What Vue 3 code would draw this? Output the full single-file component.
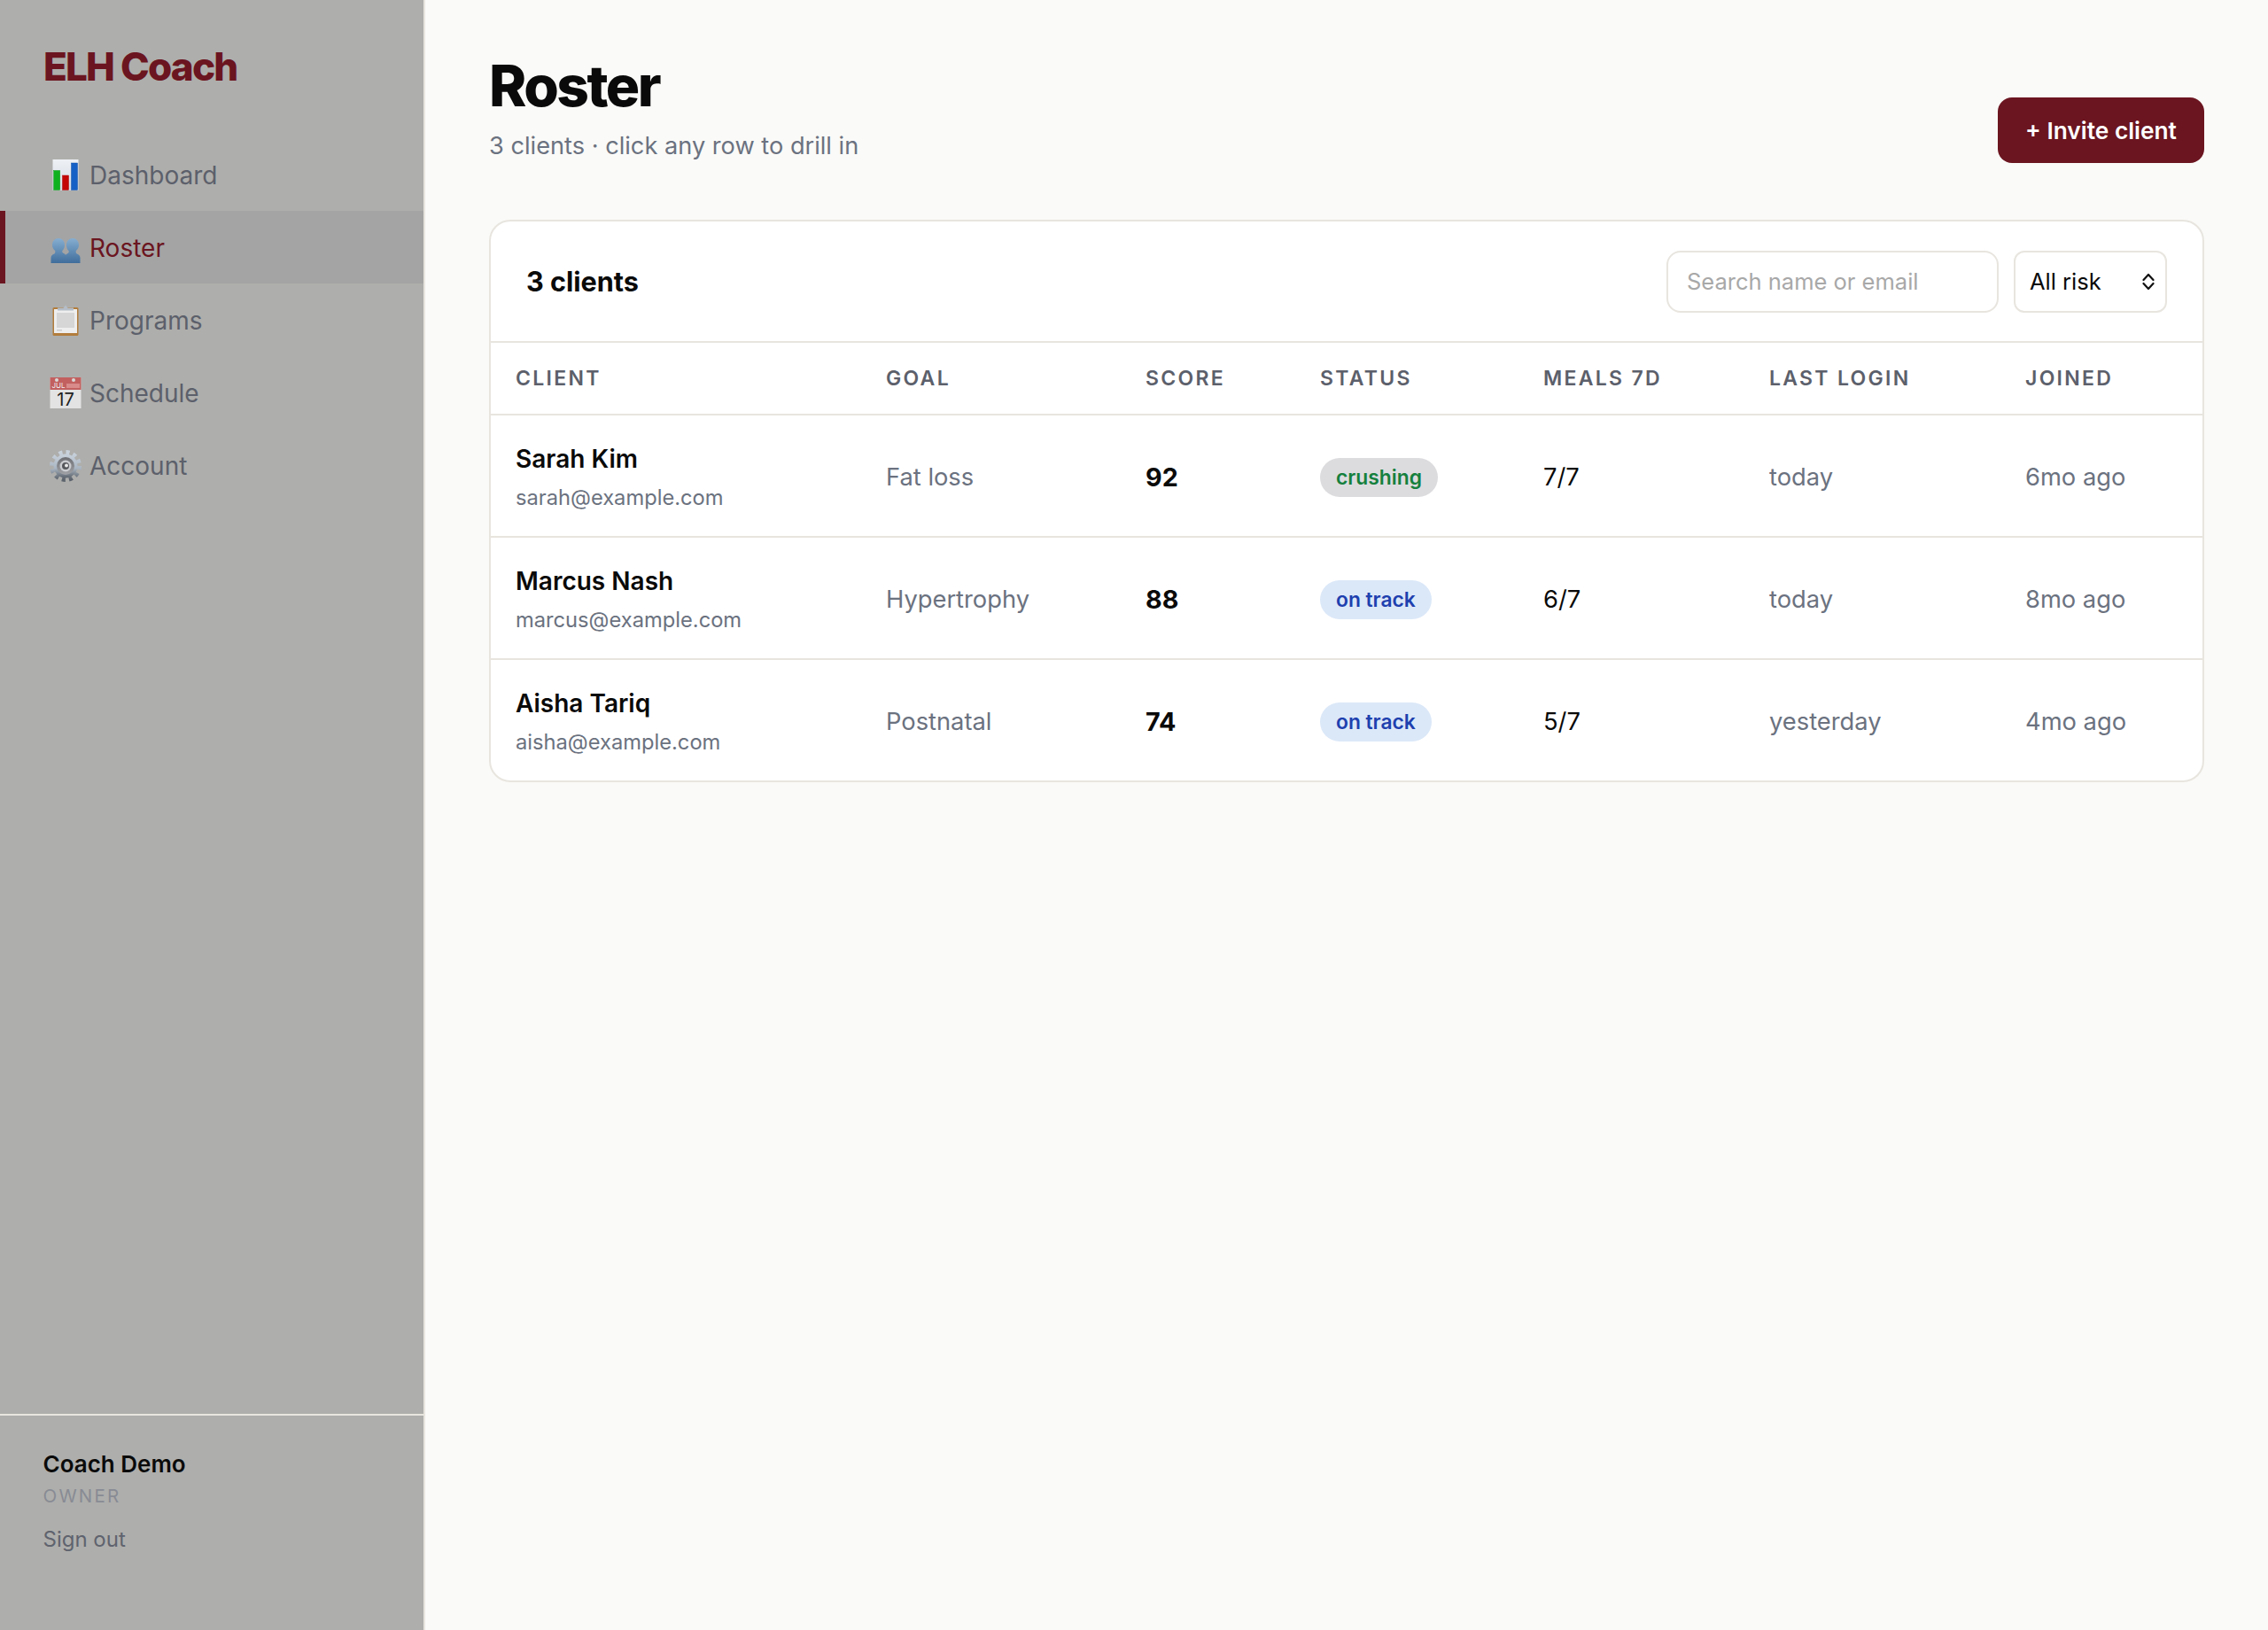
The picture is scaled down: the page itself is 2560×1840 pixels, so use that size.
<template>
  <div class="app">
    <!-- Sidebar -->
    <aside class="sidebar">
      <div class="brand">ELH Coach</div>
      <nav class="nav">
        <a v-for="item in navItems" :key="item.label" class="nav-item" :class="{ active: item.label === 'Roster' }" href="#">
          <span class="nav-icon">
            <svg v-if="item.icon === 'chart'" viewBox="0 0 36 36" width="36" height="36">
              <defs>
                <linearGradient id="chartBg" x1="0" y1="0" x2="0" y2="1">
                  <stop offset="0" stop-color="#eef1f5" />
                  <stop offset="1" stop-color="#d3dae4" />
                </linearGradient>
              </defs>
              <rect x="3.500" y="0" width="29" height="35" fill="url(#chartBg)" />
              <rect x="4.700" y="12.500" width="7" height="22" fill="#0fb21e" stroke="#0a9a18" stroke-width=".5" />
              <rect x="14.500" y="18" width="7" height="16.500" fill="#c40606" stroke="#b00808" stroke-width=".5" />
              <rect x="24.500" y="4" width="7" height="30.500" fill="#1560c6" stroke="#1050a8" stroke-width=".5" />
            </svg>
            <svg v-else-if="item.icon === 'users'" viewBox="0 0 36 36" width="36" height="36">
              <defs>
                <linearGradient id="userFill" x1="0" y1="0" x2="0" y2="1">
                  <stop offset="0" stop-color="#86aed1" />
                  <stop offset="1" stop-color="#3f6d9b" />
                </linearGradient>
              </defs>
              <g fill="url(#userFill)">
                <path d="M10 7c4.200 0 7 3.300 7 7.600 0 2.700-1 5-2.600 6.500-.3 1.200-.1 2 .7 2.500 1.700.9 2.900 1.500 3.400 3.400V35H1.500v-6c0-2.200 1.500-3.500 3.700-4.500 1-.5 1.300-1.300 1-3.400C4.300 19.600 3 17.300 3 14.600 3 10.300 5.800 7 10 7z" />
                <path d="M26 7c4.200 0 7 3.300 7 7.600 0 2.700-1.300 5-3.200 6.500-.3 2.100 0 2.900 1 3.400 2.200 1 3.700 2.300 3.700 4.500v6H17.500v-7.900c.5-1.900 1.700-2.500 3.400-3.400.8-.5 1-1.300.7-2.500-1.600-1.500-2.600-3.800-2.600-6.500C19 10.300 21.800 7 26 7z" />
              </g>
            </svg>
            <svg v-else-if="item.icon === 'clipboard'" viewBox="0 0 36 36" width="36" height="36">
              <rect x="3.500" y="3" width="29" height="32" rx="1.500" fill="#b27d3c" />
              <rect x="5" y="5" width="26" height="27" fill="#eeeeee" />
              <rect x="8" y="9" width="20" height="17" fill="#d6d6d6" />
              <rect x="8" y="28" width="6" height="1.500" fill="#cccccc" />
              <path d="M9 6.500V3.500h6.500L18 .5l2.500 3H27v3z" fill="#b4bdc8" />
            </svg>
            <svg v-else-if="item.icon === 'calendar'" viewBox="0 0 36 36" width="36" height="36">
              <rect x=".5" y="0" width="35" height="35" fill="#e3e3e3" />
              <rect x=".5" y="0" width="35" height="14" fill="#c2605f" />
              <circle cx="8" cy="3" r="2" fill="#d8d8d8" />
              <circle cx="27" cy="3" r="2" fill="#d8d8d8" />
              <rect x="19" y="7" width="15" height="5" fill="#d88b8a" />
              <text x="2.500" y="12" class="cal-month">JUL</text>
              <text x="18" y="31.500" text-anchor="middle" class="cal-day">17</text>
            </svg>
            <svg v-else viewBox="0 0 36 36" width="36" height="36">
              <defs>
                <linearGradient id="gearFill" x1="0" y1="0" x2="0" y2="1">
                  <stop offset="0" stop-color="#c8d2dd" />
                  <stop offset=".6" stop-color="#a9b5c2" />
                  <stop offset="1" stop-color="#5c636c" />
                </linearGradient>
                <linearGradient id="gearRing" x1="0" y1="0" x2="0" y2="1">
                  <stop offset="0" stop-color="#6d6f74" />
                  <stop offset="1" stop-color="#a0a2a6" />
                </linearGradient>
              </defs>
              <circle cx="18" cy="18" r="15" fill="none" stroke="url(#gearFill)" stroke-width="6" stroke-dasharray="3.900 3.960" />
              <circle cx="18" cy="18" r="13.500" fill="url(#gearFill)" />
              <circle cx="18" cy="18" r="10" fill="url(#gearRing)" />
              <circle cx="18" cy="18" r="6.500" fill="#c9cbcf" />
              <circle cx="18" cy="18" r="4" fill="#55575c" />
              <circle cx="19" cy="17.500" r="2" fill="#e8e8e8" />
            </svg>
          </span>
          <span>{{ item.label }}</span>
        </a>
      </nav>
      <div class="side-foot">
        <div class="coach-name">Coach Demo</div>
        <div class="coach-role">OWNER</div>
        <a class="sign-out" href="#">Sign out</a>
      </div>
    </aside>

    <!-- Main -->
    <main class="main">
      <header class="page-head">
        <div>
          <h1>Roster</h1>
          <p class="sub">3 clients · click any row to drill in</p>
        </div>
        <button class="invite">+ Invite client</button>
      </header>

      <section class="card">
        <div class="card-head">
          <h2>3 clients</h2>
          <div class="filters">
            <input class="search" type="text" placeholder="Search name or email" />
            <div class="select-wrap">
              <select class="risk">
                <option>All risk</option>
              </select>
              <svg class="chevrons" viewBox="0 0 14 20" width="14" height="20">
                <path d="M1.500 8 7 2l5.500 6M1.500 12 7 18l5.500-6" fill="none" stroke="#111" stroke-width="2.200" stroke-linecap="round" stroke-linejoin="round" />
              </svg>
            </div>
          </div>
        </div>

        <table class="roster">
          <colgroup>
            <col class="c-client" />
            <col class="c-goal" />
            <col class="c-score" />
            <col class="c-status" />
            <col class="c-meals" />
            <col class="c-login" />
            <col class="c-joined" />
          </colgroup>
          <thead>
            <tr>
              <th>Client</th>
              <th>Goal</th>
              <th>Score</th>
              <th>Status</th>
              <th>Meals 7d</th>
              <th>Last login</th>
              <th>Joined</th>
            </tr>
          </thead>
          <tbody>
            <tr v-for="c in clients" :key="c.email">
              <td>
                <div class="name">{{ c.name }}</div>
                <div class="email">{{ c.email }}</div>
              </td>
              <td class="muted">{{ c.goal }}</td>
              <td class="score">{{ c.score }}</td>
              <td><span class="badge" :class="c.status === 'crushing' ? 'good' : 'track'">{{ c.status }}</span></td>
              <td>{{ c.meals }}</td>
              <td class="muted">{{ c.login }}</td>
              <td class="muted">{{ c.joined }}</td>
            </tr>
          </tbody>
        </table>
      </section>
    </main>
  </div>
</template>

<script setup>
const navItems = [
  { label: "Dashboard", icon: "chart" },
  { label: "Roster", icon: "users" },
  { label: "Programs", icon: "clipboard" },
  { label: "Schedule", icon: "calendar" },
  { label: "Account", icon: "gear" },
];

const clients = [
  { name: "Sarah Kim", email: "sarah@example.com", goal: "Fat loss", score: 92, status: "crushing", meals: "7/7", login: "today", joined: "6mo ago" },
  { name: "Marcus Nash", email: "marcus@example.com", goal: "Hypertrophy", score: 88, status: "on track", meals: "6/7", login: "today", joined: "8mo ago" },
  { name: "Aisha Tariq", email: "aisha@example.com", goal: "Postnatal", score: 74, status: "on track", meals: "5/7", login: "yesterday", joined: "4mo ago" },
];
</script>

<style>
html,
body {
  margin: 0;
  background: #fafaf8;
}
</style>

<style scoped>
* {
  box-sizing: border-box;
}

.app {
  display: flex;
  height: 1840px;
  font-family: Inter, "Liberation Sans", sans-serif;
  color: #0a0a0a;
}

/* Sidebar */
.sidebar {
  width: 480px;
  flex-shrink: 0;
  display: flex;
  flex-direction: column;
  background: #aeaeac;
  border-right: 2px solid #e8e5df;
}

.brand {
  height: 156px;
  padding: 48px 48px 0 49px;
  font-size: 44px;
  line-height: 54px;
  font-weight: 800;
  letter-spacing: -1.800px;
  color: #6b1520;
}

.nav {
  flex: 1;
}

.nav-item {
  display: flex;
  align-items: center;
  gap: 9.500px;
  height: 82px;
  padding: 2px 0 0 49.500px;
  border-left: 6px solid transparent;
  font-size: 28px;
  color: #5c606b;
  text-decoration: none;
}

.nav-item.active {
  background: #a4a4a4;
  border-left-color: #6b1520;
  color: #6b1520;
}

.nav-icon {
  width: 36px;
  height: 36px;
  display: flex;
}

.cal-month {
  font-size: 8px;
  fill: #eeeeee;
}

.cal-day {
  font-size: 20px;
  fill: #222222;
}

.side-foot {
  height: 244px;
  padding: 38px 48.500px;
  border-top: 2px solid #e8e5df;
}

.coach-name {
  font-size: 26px;
  line-height: 34px;
  font-weight: 600;
}

.coach-role {
  margin-top: 4px;
  font-size: 20.500px;
  line-height: 30px;
  letter-spacing: 2.200px;
  color: #888b94;
}

.sign-out {
  display: block;
  margin-top: 18px;
  font-size: 24px;
  line-height: 32px;
  color: #5f636e;
  text-decoration: none;
}

/* Main */
.main {
  flex: 1;
  padding: 59px 72px;
}

.page-head {
  display: flex;
  justify-content: space-between;
  align-items: flex-end;
  margin-bottom: 64px;
}

h1 {
  margin: 0;
  font-size: 64px;
  line-height: 76px;
  font-weight: 800;
  letter-spacing: -2.500px;
}

.sub {
  margin: 10px 0 0;
  font-size: 27.200px;
  line-height: 39px;
  color: #6b7280;
}

.invite {
  width: 233px;
  height: 74px;
  padding: 0;
  border: none;
  border-radius: 16px;
  background: #6b1520;
  color: #fff;
  font-family: inherit;
  font-size: 26.300px;
  font-weight: 600;
}

.card {
  background: #fff;
  border: 2px solid #e8e5df;
  border-radius: 24px;
  overflow: hidden;
}

.card-head {
  display: flex;
  justify-content: space-between;
  align-items: center;
  height: 137px;
  padding: 0 40px;
  border-bottom: 2px solid #e8e5df;
}

h2 {
  margin: 0;
  font-size: 30.600px;
  font-weight: 700;
}

.filters {
  display: flex;
  gap: 17px;
}

.search {
  width: 375px;
  height: 70px;
  padding: 0 21px;
  border: 2px solid #e8e5df;
  border-radius: 16px;
  background: #fff;
  outline: none;
  font-family: inherit;
  font-size: 25.500px;
}

.search::placeholder {
  color: #a8a8a8;
}

.select-wrap {
  position: relative;
}

.risk {
  display: block;
  width: 173px;
  height: 70px;
  padding: 0 16px;
  border: 2px solid #e8e5df;
  border-radius: 12px;
  background: #fff;
  appearance: none;
  font-family: inherit;
  font-size: 25.500px;
  color: #0a0a0a;
}

.chevrons {
  position: absolute;
  top: 25px;
  right: 14px;
  pointer-events: none;
}

.roster {
  width: 100%;
  table-layout: fixed;
  border-collapse: separate;
  border-spacing: 0;
  font-size: 27.300px;
}

.c-client { width: 418px; }
.c-goal { width: 293px; }
.c-score { width: 197px; }
.c-status { width: 252px; }
.c-meals { width: 255px; }
.c-login { width: 289px; }
.c-joined { width: 228px; }

th {
  height: 80px;
  padding: 0 28px;
  text-align: left;
  font-size: 23px;
  font-weight: 600;
  letter-spacing: 2.300px;
  text-transform: uppercase;
  color: #5c606b;
}

td {
  height: 138px;
  padding: 3px 28px 0;
  border-top: 2px solid #e8e5df;
}

.name {
  font-size: 28px;
  line-height: 34px;
  font-weight: 600;
}

.email {
  margin-top: 12px;
  font-size: 23.700px;
  line-height: 30px;
  color: #6b7280;
}

.muted {
  color: #6b7280;
}

.score {
  font-size: 28.700px;
  font-weight: 700;
}

.badge {
  display: inline-block;
  height: 44px;
  padding: 0 18px;
  border-radius: 22px;
  font-size: 22.800px;
  line-height: 44px;
  font-weight: 600;
}

.badge.good {
  background: #dcdcdf;
  color: #15803d;
}

.badge.track {
  background: #dbe8f8;
  color: #1e40af;
}
</style>
